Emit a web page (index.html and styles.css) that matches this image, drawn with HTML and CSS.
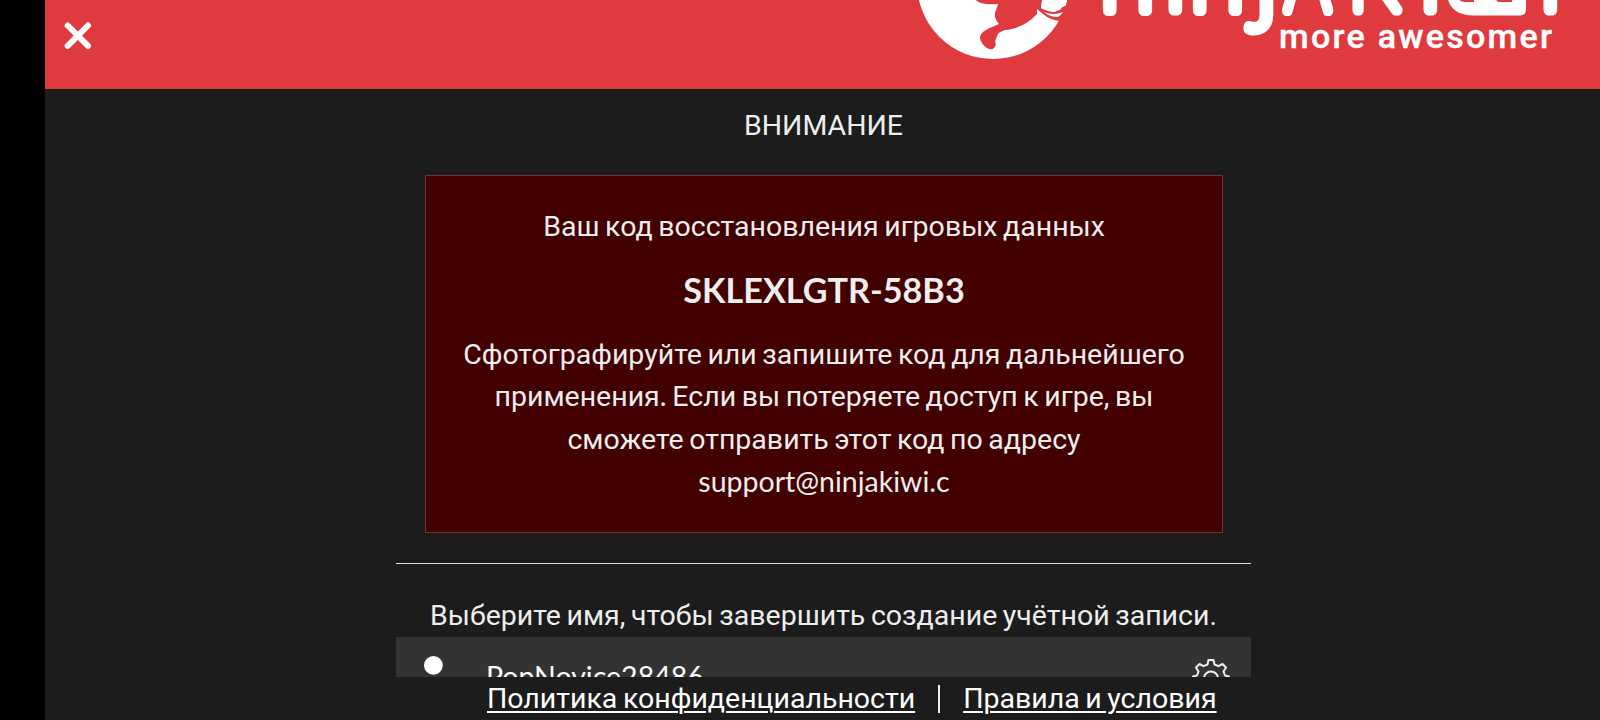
FILE: index.html
```html
<!DOCTYPE html>
<html lang="ru">
<head>
<meta charset="utf-8">
<title>Ninja Kiwi</title>
<link rel="stylesheet" href="styles.css">
</head>
<body>
<div class="app">
  <header class="header">
    <button class="close" aria-label="Закрыть">
      <svg width="28" height="28" viewBox="0 0 28 28"><path d="M3.700 3.500 24 23.800M24 3.500 3.700 23.800"/></svg>
    </button>
    <svg class="logo" width="660" height="62" viewBox="915 0 660 62">
      <circle class="white" cx="993" cy="-17" r="76"/>
      <path class="red" d="M975 -1C978 4 989 5 998 4C997 9 994 12 995 17Q996 21 999 24C990 28 980 31 980 38C981 44 988 51 993 49Q995 48 996 44Q994 43 997 36Q998 32 1005 30C1017 29 1028 24 1037 14L1037 9L1043 14Q1050 20 1060 21L1068 20L1068 5Q1062 6 1060 10Q1051 13 1041 8L1043 -2Z"/>
      <path class="white" d="M1041 8Q1041 3 1043 -2H1067L1066 5Q1059 8 1055 12Q1048 12 1041 8ZM1044 12Q1054 16 1063 12Q1061 15 1058 17Q1049 17 1044 12Z"/>
      <g class="wordmark">
        <text x="1100" y="10">n</text><text x="1165" y="10">i</text><text x="1190" y="10">n</text><text x="1256" y="9">j</text><text transform="translate(1285 10) scale(.76 1)">A</text><text transform="translate(1349 10) scale(.82 1)">K</text><text x="1420" y="10">i</text><text x="1461" y="7">w</text><text x="1540" y="10">i</text>
      </g>
      <path class="white" d="M1447 -6Q1449 15.500 1474 15.500H1520Q1526 15.500 1526 9V-6Z"/>
      <path class="red" d="M1458 -2H1474V2H1465Q1460 2 1458 -2ZM1496 -2H1512V2H1499Q1496 2 1496 -2Z"/>
      <text class="tagline" x="1279" y="48" textLength="273">more awesomer</text>
    </svg>
  </header>
  <main class="content">
    <h1 class="title">ВНИМАНИЕ</h1>
    <section class="notice">
      <p>Ваш код восстановления игровых данных</p>
      <p class="code">SKLEXLGTR-58B3</p>
      <p class="help">Сфотографируйте или запишите код для дальнейшего<br>применения<span class="latin">. </span>Если вы потеряете доступ к игре, вы<br>сможете отправить этот код по адресу<br><span class="latin">support@ninjakiwi.c</span></p>
    </section>
    <section class="account">
      <p class="prompt">Выберите имя, чтобы завершить создание учётной записи.</p>
      <div class="field">
        <svg class="user" width="38" height="44" viewBox="0 0 38 44"><circle cx="19.400" cy="10.300" r="9.400"/><path d="M2 43Q2 22 19 22T36 43Z"/></svg>
        <span class="name latin">PopNovice28486</span>
        <svg class="gear" width="38" height="38" viewBox="0 0 38 38"><path d="M16.500 1h5l1 4.500 4 1.700L30.500 5 34 8.500 31.500 12.500 33 16.500 37 17.500v4l-4 1-1.700 4 2.500 4-3.500 3.500-4-2.500-4 1.500-1 4h-5l-1-4-4-1.500-4 2.500L4 30.500 6.500 26.500 5 22.500 1 21.500v-4l4-1 1.500-4L4 8.500 7.500 5l4 2.200 4-1.700Z"/><circle cx="19" cy="19.500" r="7"/></svg>
      </div>
    </section>
  </main>
  <footer class="footer">
    <a href="#">Политика конфиденциальности</a>
    <span class="divider"></span>
    <a href="#">Правила и условия</a>
  </footer>
</div>
</body>
</html>
```
FILE: styles.css
```css
* { box-sizing: border-box; }
body { margin: 0; background: #000; overflow: hidden; }
.app {
  display: flex;
  flex-direction: column;
  width: 1555px;
  height: 720px;
  margin-left: 45px;
  background: #1c1c1c;
  color: #eee;
  font: 28.5px/42.7px Roboto, sans-serif;
  word-spacing: -1.5px;
}
p, h1 { margin: 0; white-space: nowrap; }
.header {
  display: flex;
  flex: 0 0 89px;
  justify-content: space-between;
  padding: 0 25px 0 19px;
  background: #df3b3f;
}
.close { width: 28px; height: 28px; margin-top: 22px; padding: 0; border: 0; background: none; }
.close svg { display: block; fill: none; stroke: #fff; stroke-width: 6; stroke-linecap: round; }
.white { fill: #fff; }
.red { fill: #df3b3f; }
.wordmark { fill: #fff; stroke: #fff; stroke-width: 11px; stroke-linejoin: round; font: 100 100px Roboto, sans-serif; }
.tagline { fill: #fff; stroke: #fff; stroke-width: .4px; font: 500 34px Roboto, sans-serif; word-spacing: 0; }
.content { flex: 0 0 588px; width: 855px; margin-left: 351px; overflow: hidden; text-align: center; }
.title { height: 86px; padding-top: 16px; font-size: 28.5px; font-weight: 400; }
.notice { height: 358px; margin: 0 28px 0 29px; padding-top: 30px; border: 1px solid #733434; background: #420000; }
.code { margin: 19px 0 23px; font: 700 34.2px/43px Lato, sans-serif; }
.latin { font-family: Lato, sans-serif; line-height: 1; }
.account { margin-top: 30px; padding-top: 31px; border-top: 1px solid #ddd; }
.prompt { height: 42px; }
.field { display: flex; height: 90px; padding: 18px 21px 0 18px; background: #333; color: #fff; }
.user { fill: #fff; }
.name { margin: 7px auto 0 34px; }
.gear { margin-top: 4px; fill: none; stroke: #eee; stroke-width: 2; stroke-linejoin: round; }
.footer { display: flex; align-items: center; flex: 1; padding: 1px 0 0 442px; color: #fff; white-space: nowrap; }
.footer a { color: #fff; text-decoration-thickness: 2px; text-underline-offset: 3px; }
.divider { width: 2px; height: 28px; margin: 0 23px; background: #eee; }
```
